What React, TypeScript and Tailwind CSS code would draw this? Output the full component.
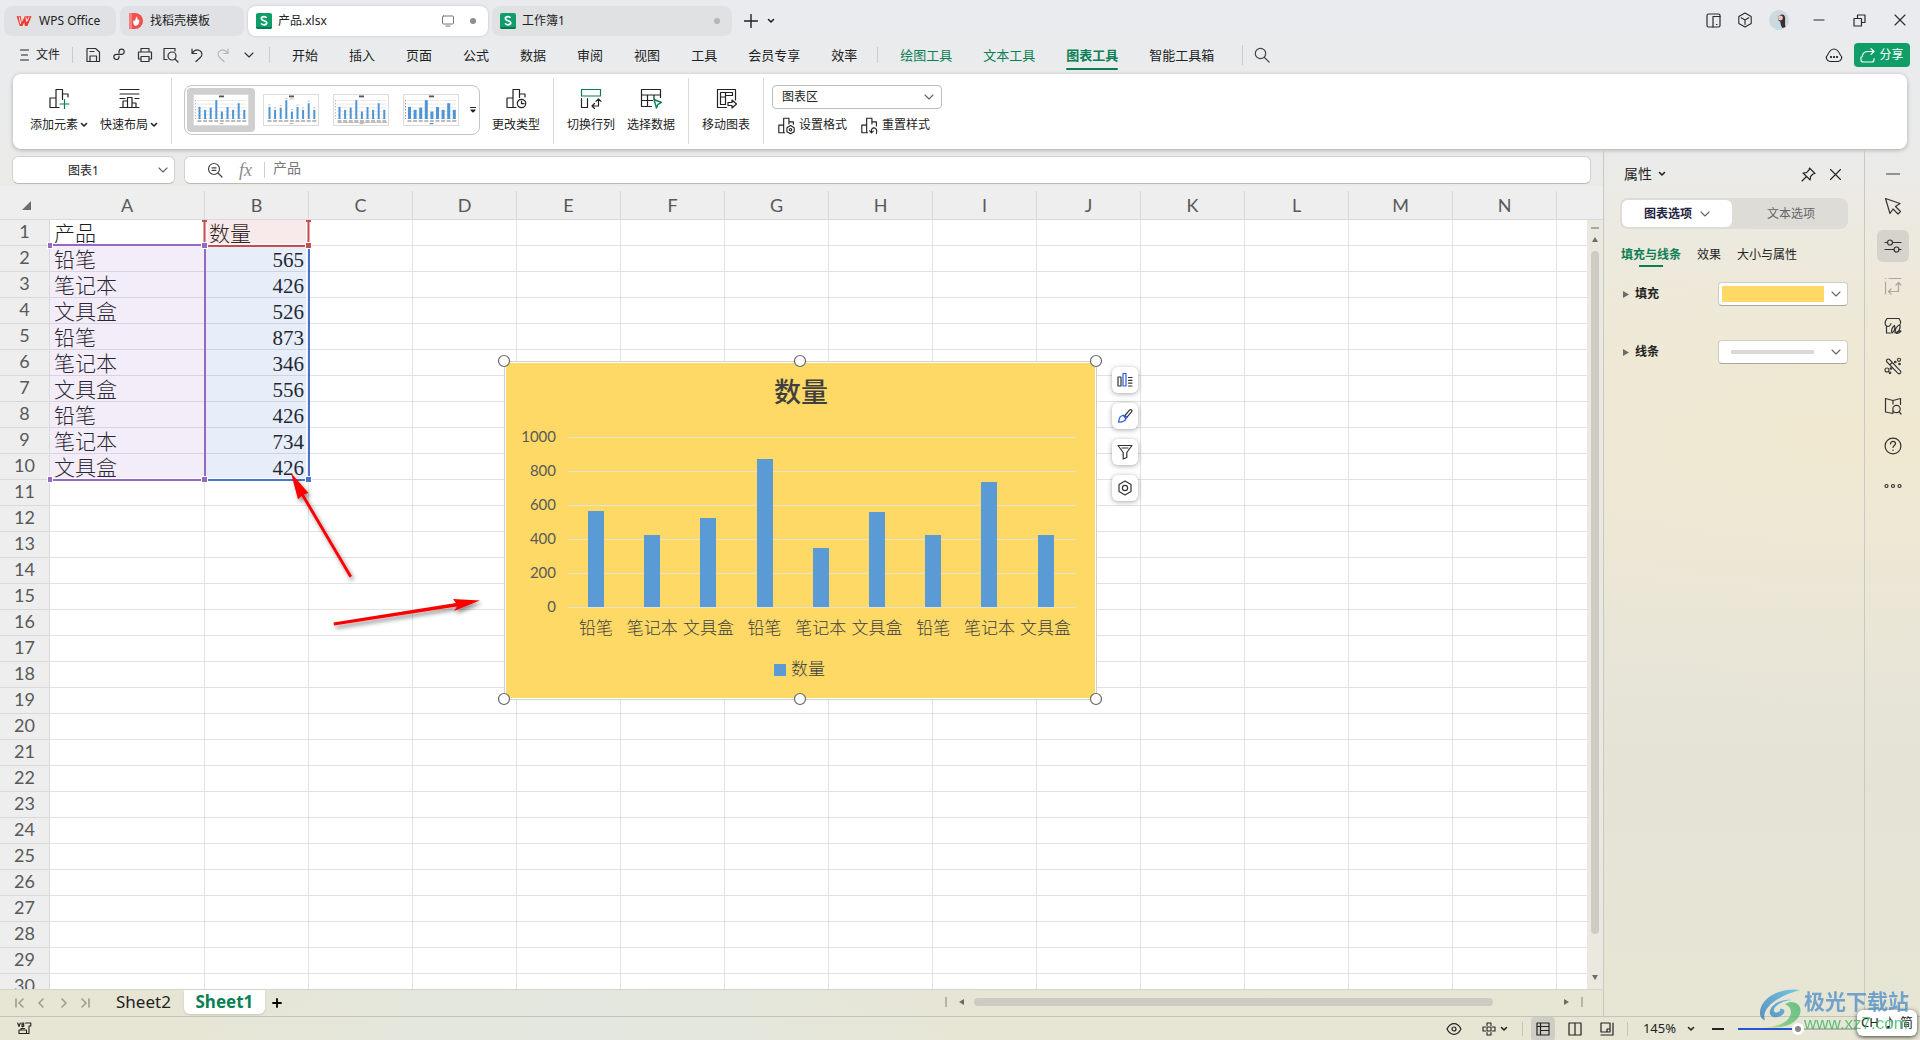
import React from "react";

const UI = "font-['Noto_Sans','Noto_Sans_CJK_SC',sans-serif]";

type IconProps = {
  w?: number;
  h?: number;
  box?: string;
  className?: string;
  sw?: number;
  children: React.ReactNode;
};

function Icon({ w = 16, h = 16, box, className = "", sw = 1.2, children }: IconProps) {
  return (
    <svg
      width={w}
      height={h}
      viewBox={box ?? `0 0 ${w} ${h}`}
      fill="none"
      stroke="currentColor"
      strokeWidth={sw}
      strokeLinecap="round"
      strokeLinejoin="round"
      className={`shrink-0 ${className}`}
      aria-hidden="true"
    >
      {children}
    </svg>
  );
}

function Chevron({ className = "" }: { className?: string }) {
  return (
    <Icon w={10} h={6} className={className} sw={1.1}>
      <path d="M1 1l4 4 4-4" />
    </Icon>
  );
}

function Caret({ className = "" }: { className?: string }) {
  return (
    <Icon w={8} h={6} className={className} sw={1.6}>
      <path d="M1.5 1.5L4 4l2.5-2.5" />
    </Icon>
  );
}

/* ---------- title bar ---------- */

function SheetBadge() {
  return (
    <svg width="16" height="16" viewBox="0 0 16 16" className="shrink-0" aria-hidden="true">
      <rect width="16" height="16" rx="2" fill="#0f9d68" />
      <path d="M0 14h16v0a2 2 0 0 1-2 2H2a2 2 0 0 1-2-2z" fill="#0b7a50" />
      <path
        d="M10.6 4.9C10 4 9.1 3.7 8 3.7c-1.5 0-2.6.7-2.6 1.9 0 2.7 5.3 1.5 5.3 4.2 0 1.2-1.2 2-2.7 2-1.3 0-2.3-.5-2.9-1.4"
        fill="none"
        stroke="#fff"
        strokeWidth="1.7"
      />
    </svg>
  );
}

function TitleBar() {
  return (
    <header className="flex h-10 items-start pt-1.5 pl-1 text-xs text-[#222]">
      <nav className="flex items-center gap-1" aria-label="文档标签">
        <button className="flex h-[30px] w-28 items-center gap-1.5 rounded-lg bg-[#dfe1e4] pl-3">
          <svg width="17" height="12" viewBox="0 0 17 12" fill="none" className="shrink-0" aria-hidden="true">
            <path d="M.6 1.2h4.2l1 6.3 3-6.3h6.8L11.4 11H8.900l-.6-3.700L6.400 11H3.800z" fill="#f03a2e" />
            <path d="M3.300 2.200l1.300 6.600M9.800 2.300l1 4.200 2.200-4.300" stroke="#fff" strokeWidth="1" />
          </svg>
          WPS Office
        </button>
        <button className="flex h-[30px] w-31 items-center gap-1.5 rounded-lg bg-[#dfe1e4] pl-2">
          <svg width="16" height="16" viewBox="0 0 16 16" className="shrink-0" aria-hidden="true">
            <path d="M1 0h6a8 8 0 0 1 0 16H1z" fill="#f0504c" />
            <path d="M1 0h3v16H1z" fill="#f57f7c" />
            <path d="M7.5 13C5 12 4.8 9 6 6.8c.4 1 .8 1.300 1.200 1.400C7 6 8 4.500 9.200 3.200 9 5 9.500 6 10 7.200c.5-.4.7-.7.9-1.200C12 9 11 12.200 7.500 13z" fill="#fff" />
          </svg>
          找稻壳模板
        </button>
        <button className="flex h-[30px] w-60 items-center gap-1.5 rounded-lg bg-white pr-3 pl-2 shadow-[0_0_3px_rgba(0,0,0,0.18)]">
          <SheetBadge />
          产品.xlsx
          <Icon w={12} h={12} className="ml-auto text-[#777]" sw={1}>
            <rect x="0.5" y="1" width="11" height="8" rx="1" />
            <path d="M4 11h4" />
          </Icon>
          <span className="ml-2.5 size-1.5 rounded-full bg-[#8d8d8d]" />
        </button>
        <button className="flex h-[30px] w-60 items-center gap-1.5 rounded-lg bg-[#dfe1e3] pr-3 pl-2">
          <SheetBadge />
          工作簿1
          <span className="ml-auto size-1.5 rounded-full bg-[#b4b6b8]" />
        </button>
      </nav>
      <button className="ml-3 flex h-[30px] items-center" aria-label="新建">
        <Icon w={14} h={14} sw={1.4}>
          <path d="M7 .5v13M.5 7h13" />
        </Icon>
      </button>
      <button className="ml-[9px] flex h-[30px] items-center" aria-label="标签列表">
        <Caret />
      </button>
      <div className="mr-3.5 ml-auto flex h-7 items-center text-[#2b2b2b]">
        <button aria-label="窗口布局">
          <Icon w={15} h={15}>
            <rect x="1" y="1" width="13" height="13" rx="1.5" />
            <path d="M7 14V3.500h7M10.500 11.500h.5" />
          </Icon>
        </button>
        <button className="ml-4" aria-label="应用">
          <Icon w={16} h={16} sw={1.1}>
            <path d="M8 1l6.200 3.500v7L8 15l-6.200-3.500v-7zM4.200 5.700L8 8l3.800-2.300M8 8v4.500" />
          </Icon>
        </button>
        <button className="ml-4" aria-label="账户">
          <svg width="20" height="20" viewBox="0 0 20 20" aria-hidden="true">
            <circle cx="10" cy="10" r="10" fill="#cdd9de" />
            <path d="M9 8c1-4 6-5 7-1 .5 3-.5 7 .5 10l-3 1-3-4z" fill="#3a2c33" />
            <circle cx="11.5" cy="8" r="2.4" fill="#e9c9bf" />
            <path d="M6 19c0-5 2-8 5-8l2 8.400A10 10 0 0 1 6 19z" fill="#c3dce2" />
          </svg>
        </button>
        <button className="ml-6" aria-label="最小化">
          <Icon w={12} h={12}>
            <path d="M1 6h10" />
          </Icon>
        </button>
        <button className="ml-7" aria-label="还原">
          <Icon w={13} h={13} sw={1.2}>
            <path d="M1 4.500h7.500V12H1zM4.500 4.500V1H12v7.500H8.500" />
          </Icon>
        </button>
        <button className="ml-7" aria-label="关闭">
          <Icon w={12} h={12} sw={1.1}>
            <path d="M1 1l10 10M11 1L1 11" />
          </Icon>
        </button>
      </div>
    </header>
  );
}

/* ---------- menu row ---------- */

const MENU_ITEMS = ["开始", "插入", "页面", "公式", "数据", "审阅", "视图", "工具", "会员专享", "效率"];

function MenuRow() {
  return (
    <div className="flex h-[34px] items-center pr-2.5 pb-1 pl-5 text-[13px] text-[#222]">
      <button className="flex items-center gap-[7px] text-xs">
        <Icon w={9} h={12} sw={1.1}>
          <path d="M.5 1h8M1.500 6h6M.5 11h8" />
        </Icon>
        文件
      </button>
      <span className="ml-3 h-4 w-px bg-[#c9cbcd]" />
      <div className="ml-3 flex items-center gap-2.5 text-[#333]">
        <button aria-label="保存">
          <Icon>
            <path d="M2 1.500h8.500L14.500 5v9.500H2zM5 14.500V9h6.500v5.500M5 4.500h4" />
          </Icon>
        </button>
        <button aria-label="输出为PDF">
          <Icon>
            <path d="M8 6V4.500a2.600 2.600 0 1 1 2.600 2.800H5.400a2.600 2.600 0 1 0 2.600 2.800V9" />
          </Icon>
        </button>
        <button aria-label="打印">
          <Icon>
            <path d="M4 5V1.500h8V5M4 12H1.500V5h13v7H12M4 9.500h8v5H4z" />
          </Icon>
        </button>
        <button aria-label="打印预览">
          <Icon>
            <path d="M4 12.500H1v-11h11V4" />
            <circle cx="9" cy="9" r="4" />
            <path d="M12 12l3 3" />
          </Icon>
        </button>
        <button aria-label="撤销">
          <Icon>
            <path d="M3 2v4.500h4.500M3.200 6.300C5 3.500 8 2.300 10.500 3.500c3.200 1.600 3 5 .8 7L7 14.500" />
          </Icon>
        </button>
        <button aria-label="恢复" className="text-[#b5b7b9]">
          <Icon>
            <path d="M13 2v4.500H8.500M12.800 6.300C11 3.500 8 2.300 5.500 3.500c-3.200 1.600-3 5-.8 7L9 14.500" />
          </Icon>
        </button>
        <button aria-label="更多" className="flex w-4 justify-center">
          <Chevron />
        </button>
      </div>
      <span className="ml-3 h-4 w-px bg-[#c9cbcd]" />
      <nav className="ml-[22px] flex items-center gap-[31px] pt-0.5" aria-label="功能区">
        {MENU_ITEMS.map((m) => (
          <button key={m}>{m}</button>
        ))}
      </nav>
      <span className="ml-5 h-4 w-px bg-[#c9cbcd]" />
      <nav className="ml-[22px] flex items-center gap-[31px] pt-0.5 text-[#0b7f54]" aria-label="上下文工具">
        <button>绘图工具</button>
        <button>文本工具</button>
        <button className="relative font-bold">
          图表工具
          <span className="absolute inset-x-0 -bottom-1 h-0.5 rounded bg-[#0b7f54]" />
        </button>
        <button className="text-[#222]">智能工具箱</button>
      </nav>
      <span className="ml-7 h-5 w-px bg-[#c9cbcd]" />
      <button className="ml-[11px]" aria-label="搜索">
        <Icon className="text-[#444]">
          <circle cx="6.5" cy="6.5" r="5.2" />
          <path d="M10.500 10.500l4.700 4.700" />
        </Icon>
      </button>
      <button className="ml-auto" aria-label="云同步">
        <Icon w={18} h={16} sw={1.1}>
          <path d="M5 14.500h8a3.800 3.800 0 0 0 2.300-6.700C13.700 4.500 11.500 2 9 2S4.300 4.500 2.700 7.800A3.800 3.800 0 0 0 5 14.500z" />
          <path d="M5.800 10h.4M8.800 10h.4M11.800 10h.4" strokeWidth="1.8" />
        </Icon>
      </button>
      <button className="ml-[11px] flex h-6 w-14 items-center justify-center gap-1 rounded bg-[#0f9d68] text-xs text-white">
        <Icon w={15} h={15} sw={1.1}>
          <path d="M1 9v3a2 2 0 0 0 2 2h9a2 2 0 0 0 2-2v-1.500M2 9c.5-3.500 3-5.500 6-5.500h6M11 .7l3 2.800-3 2.800" />
        </Icon>
        分享
      </button>
    </div>
  );
}

/* ---------- ribbon ---------- */

const THUMB_DATA = [565, 426, 526, 873, 346, 556, 426, 734, 426];

function Thumb({ kind, active = false }: { kind: number; active?: boolean }) {
  const barW = kind === 3 ? 3 : 2;
  return (
    <button
      className={`flex h-11 w-[68px] items-center justify-center rounded ${active ? "bg-[#cfcfcf]" : ""}`}
      aria-label={`图表样式${kind + 1}`}
    >
      <svg width="56" height="32" viewBox="0 0 56 32" aria-hidden="true">
        <rect x="0.5" y="0.5" width="55" height="31" fill="#fff" stroke="#dcdcdc" />
        <rect x="26" y="1.5" width="5" height="1.8" fill="#555" />
        {kind !== 1 &&
          [0, 1, 2, 3, 4, 5].map((i) => (
            <path key={i} d={`M4 ${6.5 + i * 3.6}h49`} stroke="#e4e4e4" strokeWidth="0.8" />
          ))}
        {kind !== 1 && (
          <path d="M2.500 6v19" stroke={kind === 3 ? "#9a94b8" : "#bbb"} strokeWidth="1" strokeDasharray="1.5 1.5" />
        )}
        {kind === 1 && <path d="M26 5h5" stroke="#c4c4c4" strokeWidth="1" />}
        {THUMB_DATA.map((v, i) => {
          const h = v * 0.0215;
          const x = 6.5 + i * 5.6;
          return (
            <g key={i}>
              <rect x={x - barW / 2} y={25 - h} width={barW} height={h} fill="#4f94d4" />
              <path d={`M${x - 2} 27h4`} stroke="#8d8d8d" strokeWidth="1.2" />
              {kind === 1 && <path d={`M${x - 1} ${23 - h}h2`} stroke="#bbb" strokeWidth="1" />}
              {kind === 2 && <path d={`M${x - 2} 28.500h5`} stroke="#aaa" strokeWidth="0.8" />}
            </g>
          );
        })}
        <rect x="26.5" y="29" width="4" height="1.2" fill={kind === 3 ? "#4f94d4" : "#bbb"} />
      </svg>
    </button>
  );
}

function RibbonButton({ icon, label, caret = false }: { icon: React.ReactNode; label: string; caret?: boolean }) {
  return (
    <button className="flex flex-col items-center gap-1.5">
      {icon}
      <span className="flex items-center gap-0.5 leading-5">
        {label}
        {caret && <Caret />}
      </span>
    </button>
  );
}

function Divider() {
  return <span className="h-[66px] w-px bg-[#d9d9d9]" />;
}

function Ribbon() {
  return (
    <section
      className="mx-[13px] flex h-[75px] items-start rounded-lg bg-white pt-1 text-xs text-[#222] shadow-[0_1px_4px_rgba(0,0,0,0.28)]"
      aria-label="图表工具"
    >
      <div className="flex h-[66px] items-start gap-3 pt-2.5 pr-[13px] pl-[17px]">
        <RibbonButton
          caret
          label="添加元素"
          icon={
            <Icon w={21} h={21}>
              <path d="M1 10h6M1 10v9.500h9M7 19.500V1.500h6.500v10M13.500 6H19v3" />
              <path d="M15.500 11.500v9M11 16h9" stroke="#0b7f54" />
            </Icon>
          }
        />
        <RibbonButton
          caret
          label="快速布局"
          icon={
            <Icon w={21} h={21}>
              <path d="M1 1.500h19M1 6h19M1 10.500h5M16 10.500h4M1 19.500h19M4 19.500V13h4.500v6.500V9.500H13v10V15h4v4.500" />
            </Icon>
          }
        />
      </div>
      <Divider />
      <div className="mt-[7px] ml-3 flex h-[50px] items-center gap-0.5 rounded-lg border border-[#c4c4c4] pl-0.5">
        <Thumb kind={0} active />
        <Thumb kind={1} />
        <Thumb kind={2} />
        <Thumb kind={3} />
        <button className="flex w-3 justify-center" aria-label="更多样式">
          <Icon w={8} h={8} sw={1.1}>
            <path d="M1.500 1.500h5" />
            <path d="M2 4h4L4 6z" fill="currentColor" />
          </Icon>
        </button>
      </div>
      <div className="flex h-[66px] items-start pt-2.5 pr-[13px] pl-3">
        <RibbonButton
          label="更改类型"
          icon={
            <Icon w={21} h={21}>
              <path d="M1 10h6M1 10v9.500h9M7 19.500V1.500h6.500v8M13.500 6H19v3" />
              <circle cx="15.5" cy="15.5" r="4.2" />
              <path d="M15.500 13v2.700H18" />
            </Icon>
          }
        />
      </div>
      <Divider />
      <div className="flex h-[66px] items-start gap-3 pt-2.5 pr-[13px] pl-[13px]">
        <RibbonButton
          label="切换行列"
          icon={
            <Icon w={22} h={21}>
              <path d="M1.500 1.500h19V8h-19z" stroke="#0b7f54" />
              <path d="M1.500 10.500v9h6v-9M12 18h6.500v-7M14.500 15.500L12 18l2.500 2.500M16 13.300l2.500-2.500 2.500 2.500" />
            </Icon>
          }
        />
        <RibbonButton
          label="选择数据"
          icon={
            <Icon w={22} h={21}>
              <path d="M1.500 1.500h19v8M1.500 1.500v17h10M1.500 7h19M1.500 12.500h11M7.500 7v11.500M14 7v4" />
              <path d="M14 11.500l7.500 3-3.500 1.800-1.500 3.700z" stroke="#0b7f54" strokeWidth="1.4" />
            </Icon>
          }
        />
      </div>
      <Divider />
      <div className="flex h-[66px] items-start pt-2.5 pr-[13px] pl-[13px]">
        <RibbonButton
          label="移动图表"
          icon={
            <Icon w={21} h={21}>
              <path d="M10.500 19.500h-9v-18h18V12M4.500 16.500v-12h12v3h-7v9h-5M4.500 9h5M9.500 4.500V9" />
              <path d="M12 14.500h4v-2.500l4.500 4-4.500 4v-2.500h-4z" />
            </Icon>
          }
        />
      </div>
      <Divider />
      <div className="mt-[7px] ml-2 flex flex-col gap-1.5">
        <label className="relative flex items-center">
          <select
            aria-label="图表元素"
            className="h-6 w-[170px] appearance-none rounded border border-[#bdbdbd] bg-white pl-[9px] text-xs text-[#222]"
          >
            <option>图表区</option>
          </select>
          <Chevron className="pointer-events-none absolute right-2 text-[#666]" />
        </label>
        <div className="flex items-center gap-3.5 pl-1.5 leading-5">
          <button className="flex items-center gap-1">
            <Icon w={17} h={19} box="0 0 21 21" sw={1.4}>
              <path d="M1 10h6M1 10v9.500h7M7 19.500V1.500h6.500v7M13.500 6H19v3" />
              <path d="M15.500 10.500l4.500 2.700v5l-4.500 2.600-4.500-2.600v-5z" />
              <circle cx="15.5" cy="15.7" r="1.5" />
            </Icon>
            设置格式
          </button>
          <button className="flex items-center gap-1">
            <Icon w={17} h={19} box="0 0 21 21" sw={1.4}>
              <path d="M1 10h6M1 10v9.500h7M7 19.500V1.500h6.500v7M13.500 6H19v5" />
              <path d="M19 20.500c1.500-4-.5-7-3-7-2 0-3.200 2-3.200 5M10.700 17l2.100 2.500 2.500-2" />
            </Icon>
            重置样式
          </button>
        </div>
      </div>
    </section>
  );
}

/* ---------- formula bar ---------- */

function FormulaBar() {
  return (
    <div className="flex gap-[9px] px-3 pt-[7px] pb-0.5">
      <label className="relative flex items-center">
        <input
          aria-label="名称框"
          defaultValue="图表1"
          className="h-7 w-[163px] rounded-md border border-[#d0d2cf] border-b-[#b9bbb8] bg-white pr-5 text-center text-xs text-[#222]"
        />
        <Chevron className="pointer-events-none absolute right-[7px] text-[#666]" />
      </label>
      <div className="flex h-7 flex-1 items-center rounded-md border border-[#d0d2cf] border-b-[#b9bbb8] bg-white pl-[22px]">
        <button aria-label="浏览公式结果">
          <Icon className="text-[#444]">
            <circle cx="7" cy="7" r="5.5" />
            <path d="M11 11l4 4M5 5.800h4M5 8.300h4" />
          </Icon>
        </button>
        <button className="ml-4 font-['Liberation_Serif',serif] text-lg leading-6 text-[#8a8a8a] italic" aria-label="插入函数">
          fx
        </button>
        <span className="ml-3 h-4 w-px bg-[#cfcfcf]" />
        <input aria-label="编辑栏" defaultValue="产品" className="ml-2 min-w-0 flex-1 bg-transparent pb-1 text-sm text-[#777]" />
      </div>
    </div>
  );
}

/* ---------- worksheet ---------- */

const COLUMNS = ["A", "B", "C", "D", "E", "F", "G", "H", "I", "J", "K", "L", "M", "N"];
const DATA: [string, string][] = [
  ["产品", "数量"],
  ["铅笔", "565"],
  ["笔记本", "426"],
  ["文具盒", "526"],
  ["铅笔", "873"],
  ["笔记本", "346"],
  ["文具盒", "556"],
  ["铅笔", "426"],
  ["笔记本", "734"],
  ["文具盒", "426"],
];
const ROWS = Array.from({ length: 30 }, (_, i) => i);

function SheetTable() {
  return (
    <table className="w-full table-fixed border-separate border-spacing-0">
      <colgroup>
        <col className="w-[50px]" />
        <col className="w-[155px]" />
        {COLUMNS.slice(1).map((c) => (
          <col key={c} className="w-[104px]" />
        ))}
        <col />
      </colgroup>
      <thead>
        <tr className="h-[29px] font-['Lato',sans-serif] text-lg leading-7 text-[#595959]">
          <th className="border-b border-[#d9d9d9] p-0">
            <svg width="9" height="9" viewBox="0 0 9 9" className="ml-[22px]" aria-hidden="true">
              <path d="M9 0v9H0z" fill="#6b6b6b" />
            </svg>
          </th>
          {COLUMNS.map((c) => (
            <th key={c} className="border-r border-b border-[#d9d9d9] p-0 font-normal">
              {c}
            </th>
          ))}
          <th className="border-b border-[#d9d9d9] p-0" />
        </tr>
      </thead>
      <tbody>
        {ROWS.map((r) => (
          <tr key={r} className="h-[26px]">
            <th className="border-r border-b border-[#d9d9d9] bg-[#eeeeee] p-0 pb-0.5 font-['Lato',sans-serif] text-lg leading-[23px] font-normal text-[#595959]">
              {r + 1}
            </th>
            {COLUMNS.map((c, ci) => (
              <td
                key={c}
                className={`h-[26px] border-r border-b border-[#e2e2e2] bg-white px-1 pt-[3px] pb-0 font-['Liberation_Serif','Noto_Sans_CJK_SC',serif] text-[21px] leading-[22px] font-light whitespace-nowrap text-[#1c1c1c] ${
                  ci === 1 && r > 0 ? "text-right" : "text-left"
                }`}
              >
                {ci < 2 && DATA[r] ? DATA[r][ci] : null}
              </td>
            ))}
            <td className="border-b border-[#e2e2e2] bg-white p-0" />
          </tr>
        ))}
      </tbody>
    </table>
  );
}

function RangeMarks() {
  return (
    <svg
      width="500"
      height="460"
      viewBox="0 191 500 460"
      fill="none"
      className="pointer-events-none absolute top-0 left-0"
      aria-hidden="true"
    >
      <defs>
        <filter id="arrowShadow" x="-20%" y="-20%" width="150%" height="150%">
          <feDropShadow dx="2" dy="3" stdDeviation="2" floodColor="#000" floodOpacity="0.45" />
        </filter>
      </defs>
      <rect x="50" y="245" width="155" height="236" fill="#9467c5" fillOpacity="0.12" />
      <rect x="205" y="220" width="104" height="26" fill="#c55050" fillOpacity="0.12" />
      <rect x="205" y="246" width="104" height="235" fill="#4472d0" fillOpacity="0.12" />
      <path
        d="M50 243.500h154M207 478.500h100M53 478.500h150M306.500 247v232M207 221v24M306.500 221v24M207.500 244h98"
        stroke="#fff"
        strokeWidth="1"
      />
      <path d="M205 480h104M309 246v234" stroke="#4a72cf" strokeWidth="2" />
      <path d="M50 245h155M205 245v235M50 480h155" stroke="#9568c4" strokeWidth="2" />
      <path d="M204.500 221v25h104v-25M202 221h5M306 221h5" stroke="#c44f4f" strokeWidth="2" />
      <g stroke="#fff" strokeWidth="1">
        <rect x="201.5" y="242.5" width="6" height="6" fill="#9568c4" />
        <rect x="305.5" y="242.5" width="6" height="6" fill="#c44f4f" />
        <rect x="201.5" y="476.5" width="6" height="6" fill="#9568c4" />
        <rect x="305.5" y="476.5" width="6" height="6" fill="#4a72cf" />
        <rect x="47.5" y="242.5" width="5" height="6" fill="#9568c4" />
        <rect x="47.5" y="476.5" width="5" height="6" fill="#9568c4" />
      </g>
      <g filter="url(#arrowShadow)" fill="#fb0505">
        <path d="M291 473l17.500 20-4.500 1.500 48 81.500-2.500 1.500-48-81.500-3.500 3.500z" />
        <path d="M480 600.500l-26 10.500 3-4.500-123 19-.5-3L456 603l-3-4z" />
      </g>
    </svg>
  );
}

const CHART = [
  { name: "铅笔", value: 565 },
  { name: "笔记本", value: 426 },
  { name: "文具盒", value: 526 },
  { name: "铅笔", value: 873 },
  { name: "笔记本", value: 346 },
  { name: "文具盒", value: 556 },
  { name: "铅笔", value: 426 },
  { name: "笔记本", value: 734 },
  { name: "文具盒", value: 426 },
];
const TICKS = [0, 200, 400, 600, 800, 1000];
const HANDLES = [
  [504, 361],
  [800, 361],
  [1096, 361],
  [504, 699],
  [800, 699],
  [1096, 699],
];

function ChartObject() {
  return (
    <svg
      width="607"
      height="353"
      viewBox="497 354 607 353"
      className="absolute top-[163px] left-[497px] font-['Noto_Sans_CJK_SC',sans-serif] font-light"
      role="img"
      aria-label="数量 柱形图"
    >
      <rect x="504.5" y="361.5" width="592" height="338" fill="#fff" stroke="#cdd0d4" />
      <rect x="506" y="363" width="589" height="335" fill="#fed966" />
      <text x="801" y="402" textAnchor="middle" fontSize="27" fontWeight="500" fill="#404040">
        数量
      </text>
      {TICKS.map((t) => {
        const y = 607 - t * 0.17;
        return (
          <g key={t}>
            <rect x="568" y={y} width="508" height="1" fill="#e6e2d6" />
            <text x="556" y={y + 5} textAnchor="end" fontSize="15" fill="#595959" className="font-['Lato',sans-serif] font-normal">
              {t}
            </text>
          </g>
        );
      })}
      {CHART.map((d, i) => {
        const cx = 596 + i * 56.2;
        return (
          <g key={i}>
            <rect
              x={Math.round(cx - 8)}
              y={Math.round(607 - d.value * 0.17)}
              width="16"
              height={Math.round(d.value * 0.17)}
              fill="#5b9bd5"
            />
            <text x={cx} y="634" textAnchor="middle" fontSize="17" fill="#404040">
              {d.name}
            </text>
          </g>
        );
      })}
      <rect x="774" y="664" width="12" height="12" fill="#5b9bd5" />
      <text x="791" y="675" fontSize="17" fill="#404040">
        数量
      </text>
      {HANDLES.map(([x, y]) => (
        <circle key={`${x}-${y}`} cx={x} cy={y} r="5.5" fill="#fff" stroke="#666" strokeWidth="1.2" />
      ))}
    </svg>
  );
}

function ChartTools() {
  const cls =
    "flex h-[26px] w-[26px] items-center justify-center rounded-md bg-white text-[#333] shadow-[0_1px_5px_rgba(0,0,0,0.35)]";
  return (
    <div className="absolute top-44 left-[1112px] flex flex-col gap-2.5">
      <button className={cls} aria-label="图表元素">
        <Icon>
          <path d="M1 5h3v9H1z" />
          <path d="M6 1.500h3V14H6z" stroke="#2f5bd8" />
          <path d="M11.500 5.500H15M11.500 8.300H15M11.500 11.100H15M11.500 14H15" />
        </Icon>
      </button>
      <button className={cls} aria-label="图表样式">
        <Icon>
          <path d="M8 7.500l4.500-5.300c1.500-1.500 3.200 0 2 1.700L10 9.200" />
          <path
            d="M4.800 7.700c1.700-.8 3.600 0 4.100 1.500.5 1.700-.4 3-2 3.800-1.700.9-3.900 1.500-5.600 1 .8-1 .8-2.200 1-3.300.3-1.300 1.300-2.500 2.500-3zM8 7.500L10 9.200M6.500 7.600l2.300 3.200"
            stroke="#2f5bd8"
          />
        </Icon>
      </button>
      <button className={cls} aria-label="图表筛选器">
        <Icon>
          <path d="M1 1.500h14L9.800 8.500v5L6.200 15V8.500zM5 4h6" />
        </Icon>
      </button>
      <button className={cls} aria-label="图表设置">
        <Icon>
          <path d="M8 1l6 3.500v7L8 15l-6-3.500v-7z" />
          <circle cx="8" cy="8" r="2.6" />
        </Icon>
      </button>
    </div>
  );
}

function VerticalScroll() {
  return (
    <div className="mt-7 flex w-4 shrink-0 flex-col items-center border-t border-[#d9d9d9] bg-[#ebe8e0] py-[7px] text-[#6b6b6b]">
      <span className="h-0.5 w-2 shrink-0 bg-[#a9a9a4]" />
      <svg width="6" height="5" viewBox="0 0 6 5" className="mt-2 shrink-0" aria-hidden="true">
        <path d="M3 0l3 5H0z" fill="currentColor" />
      </svg>
      <span className="mt-[9px] mb-[41px] w-2 flex-1 rounded-full bg-[#cdccc4]" />
      <svg width="6" height="5" viewBox="0 0 6 5" className="mb-0.5 shrink-0" aria-hidden="true">
        <path d="M3 5l3-5H0z" fill="currentColor" />
      </svg>
    </div>
  );
}

function SheetTabs() {
  return (
    <div className="flex h-[27px] shrink-0 items-start border-t border-[#d4d4cc] font-['Noto_Sans',sans-serif]">
      <div className="flex h-[25px] items-center gap-3 pl-3.5 text-[#9c9c94]">
        <button aria-label="第一个">
          <Icon w={11} h={10} sw={1.6}>
            <path d="M2 1v8M9 1L5 5l4 4" />
          </Icon>
        </button>
        <button aria-label="上一个">
          <Icon w={10} h={10} sw={1.6}>
            <path d="M6 1L2 5l4 4" />
          </Icon>
        </button>
        <button aria-label="下一个">
          <Icon w={10} h={10} sw={1.6}>
            <path d="M3 1l4 4-4 4" />
          </Icon>
        </button>
        <button aria-label="最后一个">
          <Icon w={11} h={10} sw={1.6}>
            <path d="M8 1v8M1 1l4 4-4 4" />
          </Icon>
        </button>
      </div>
      <button className="ml-6 h-6 text-[17px] leading-6 text-[#222]">Sheet2</button>
      <button className="ml-[13px] h-6 w-[81px] rounded-b-md bg-white text-[17px] leading-6 font-bold text-[#0b7f54] shadow-sm">
        Sheet1
      </button>
      <button className="ml-[7px] flex h-[25px] items-center" aria-label="新建工作表">
        <Icon w={10} h={10} sw={1.8}>
          <path d="M5 1v8M1 5h8" />
        </Icon>
      </button>
      <div className="mr-5 ml-auto flex h-6 w-[638px] items-center text-[#6b6b6b]">
        <span className="h-2.5 w-0.5 bg-[#b5b5ac]" />
        <svg width="5" height="6" viewBox="0 0 5 6" className="ml-3" aria-hidden="true">
          <path d="M0 3l5-3v6z" fill="currentColor" />
        </svg>
        <span className="mr-[71px] ml-2.5 h-2 flex-1 rounded-full bg-[#cdccc2]" />
        <svg width="5" height="6" viewBox="0 0 5 6" aria-hidden="true">
          <path d="M5 3L0 0v6z" fill="currentColor" />
        </svg>
        <span className="ml-3 h-2.5 w-0.5 bg-[#b5b5ac]" />
      </div>
    </div>
  );
}

/* ---------- property panel ---------- */

function Triangle() {
  return (
    <svg width="6" height="7" viewBox="0 0 6 7" className="shrink-0 text-[#6b6b6b]" aria-hidden="true">
      <path d="M0 0l6 3.500L0 7z" fill="currentColor" />
    </svg>
  );
}

function PropertyPanel() {
  return (
    <aside className="w-[261px] shrink-0 border-l border-[#c9c9c4] pr-4 pl-4 text-xs text-[#222]" aria-label="属性">
      <div className="mt-[15px] flex h-5 items-center pr-[7px] pl-1">
        <button className="flex items-center gap-1.5 text-sm leading-5">
          属性
          <Caret />
        </button>
        <button className="ml-auto" aria-label="固定">
          <Icon w={15} h={15} sw={1.1}>
            <path d="M8.500 1l5.500 5.500-2 .5-2.500 2.500-.3 3.500L2 6l3.500-.4L8 3zM5 10l-4 4" />
          </Icon>
        </button>
        <button className="ml-3.5" aria-label="关闭属性">
          <Icon w={11} h={11} sw={1.1}>
            <path d="M.5.5l10 10M10.500.5l-10 10" />
          </Icon>
        </button>
      </div>
      <div className="mt-3.5 flex h-[31px] items-center rounded-lg bg-[#dedcd6] p-0.5">
        <button className="flex h-[27px] w-[110px] items-center justify-center gap-2 rounded-md bg-white font-bold text-[#1f2340]">
          图表选项
          <Chevron className="text-[#666]" />
        </button>
        <button className="flex-1 pl-1 text-[#666]">文本选项</button>
      </div>
      <div className="mt-4 flex gap-4 pl-px leading-5">
        <button className="relative font-bold text-[#0b7f54]">
          填充与线条
          <span className="absolute -bottom-0.5 left-[18px] h-0.5 w-6 bg-[#0b7f54]" />
        </button>
        <button>效果</button>
        <button>大小与属性</button>
      </div>
      <div className="mt-[17px] flex h-6 items-center justify-between pl-[3px]">
        <button className="flex items-center gap-1.5 font-bold">
          <Triangle />
          填充
        </button>
        <button
          aria-label="填充颜色"
          aria-haspopup="listbox"
          className="flex h-6 w-[130px] items-center justify-between rounded border border-[#d0cdc0] border-b-[#a9a79d] bg-white pr-1.5 pl-[3px] text-[#666]"
        >
          <span className="h-4 w-[102px] bg-[#fed966]" />
          <Chevron />
        </button>
      </div>
      <div className="mt-[34px] flex h-6 items-center justify-between pl-[3px]">
        <button className="flex items-center gap-1.5 font-bold">
          <Triangle />
          线条
        </button>
        <button
          aria-label="线条样式"
          aria-haspopup="listbox"
          className="flex h-6 w-[130px] items-center justify-between rounded border border-[#d0cdc0] border-b-[#a9a79d] bg-white pr-1.5 pl-3 text-[#666]"
        >
          <span className="h-1 w-[83px] bg-[#d9d9d9]" />
          <Chevron />
        </button>
      </div>
    </aside>
  );
}

function Rail() {
  const cell = "flex h-8 w-8 items-center justify-center rounded-md";
  return (
    <aside className="flex w-14 shrink-0 flex-col items-center gap-2 border-l border-[#c9c9c4] text-[#333]" aria-label="侧边栏">
      <button className="mt-[17px] flex h-4 w-8 items-center justify-center" aria-label="收起">
        <span className="h-0.5 w-3.5 bg-[#929292]" />
      </button>
      <button className={cell} aria-label="选择">
        <Icon w={18} h={18}>
          <path d="M1.500 1.500l14.500 5-4.500 3 5 5-2.500 2.500-5-5L6 16.500z" />
        </Icon>
      </button>
      <button className={`${cell} bg-[#d5d3cb]`} aria-label="属性">
        <Icon w={18} h={18}>
          <path d="M1 5.500h2.500M8.500 5.500H17M1 12.500h9M15 12.500h2" />
          <circle cx="6" cy="5.5" r="2.5" />
          <circle cx="12.5" cy="12.5" r="2.5" />
        </Icon>
      </button>
      <button className={`${cell} text-[#aaa79c]`} aria-label="转换">
        <Icon w={18} h={18}>
          <path d="M1.500 5v12M5 1.500h12M1.500 1.500h.1M4.500 14.500h10v-9M7 12l-2.500 2.500L7 17M12 8l2.500-2.500L17 8" />
        </Icon>
      </button>
      <button className={cell} aria-label="美化">
        <Icon w={18} h={18}>
          <path d="M6.500 16H2.500V9M2.500 9C1 8 1 6 1.500 4L3 1.500h12l1.500 2.800v2M2.500 9c2 .8 4 0 4.500-2.500" />
          <path d="M8 16c-1-3 0-5.500 2.500-7.500.8 3 .2 5.500-2.500 7.500zM11 16c0-4 1.500-7 5-8.500.5 4-1 7.500-5 8.500zM12.500 16.300c1.500-1.800 3-2.600 4.500-2.300-.8 1.800-2 2.500-4.500 2.300z" />
        </Icon>
      </button>
      <button className={cell} aria-label="工具">
        <Icon w={18} h={18} sw={1.1}>
          <path d="M5.500 2.500L16.300 13.800a1.700 1.700 0 0 1-2.500 2.400L3 5a1.700 1.700 0 0 1 2.500-2.500zM8.300 5.500L5.800 7.900" />
          <circle cx="15" cy="2.800" r="1.6" />
          <circle cx="11.3" cy="5" r="0.8" />
          <circle cx="3" cy="13" r="2" />
          <circle cx="7" cy="11.5" r="0.8" />
          <circle cx="6" cy="15.800" r="0.8" />
          <circle cx="15.5" cy="7" r="0.8" />
        </Icon>
      </button>
      <button className={cell} aria-label="查找">
        <Icon w={18} h={18}>
          <path d="M9 16.500l-7.500-1.500V1.500L9 3.500l7.500-2v6M9 3.500V7M9 16.500V14" />
          <circle cx="12.5" cy="12" r="3.7" />
          <path d="M15 14.700l2 2.300" />
        </Icon>
      </button>
      <button className={cell} aria-label="帮助">
        <Icon w={18} h={18}>
          <circle cx="9" cy="9" r="7.9" />
          <path d="M6.500 7c0-1.600 1.100-2.600 2.500-2.600s2.500.9 2.500 2.300c0 1.700-2.500 1.900-2.500 3.800M9 13.200v.2" />
        </Icon>
      </button>
      <button className={cell} aria-label="更多">
        <Icon w={18} h={6}>
          <circle cx="2.5" cy="3" r="1.5" />
          <circle cx="9" cy="3" r="1.5" />
          <circle cx="15.5" cy="3" r="1.5" />
        </Icon>
      </button>
    </aside>
  );
}

/* ---------- status bar ---------- */

function StatusBar() {
  return (
    <footer className="flex h-6 shrink-0 items-center border-t border-[#c4c4b8] pl-[17px] text-[#222]">
      <button aria-label="宏">
        <Icon w={15} h={14} sw={1.1}>
          <path d="M.7 1l1.300 3.500L3.300 1M5 1v3.600h1.200a1 1 0 0 0 0-1.900H5 6a.8.8 0 0 0 0-1.700zM8.500 1h5.300v3H12v7.500H2V8h7.500v3.500M4 8V6.500h3.500" />
        </Icon>
      </button>
      <div className="mr-16 ml-auto flex h-6 items-center">
        <button aria-label="护眼模式">
          <Icon w={16} h={14}>
            <path d="M1 7c1.800-3.500 4.300-5.300 7-5.300S13.200 3.500 15 7c-1.800 3.500-4.300 5.300-7 5.300S2.800 10.500 1 7z" />
            <circle cx="8" cy="7" r="2" />
          </Icon>
        </button>
        <button className="ml-5 flex items-center gap-1" aria-label="阅读模式">
          <Icon w={14} h={14} sw={1.1}>
            <path d="M5 3.500V1h4v2.500M5 10.500V13h4v-2.500M3.500 5H1v4h2.500M10.500 5H13v4h-2.500M5 5h4v4H5z" />
          </Icon>
          <Caret />
        </button>
        <span className="ml-3.5 h-3.5 w-px bg-[#c4c4b8]" />
        <button className="ml-2 flex h-6 w-6 items-center justify-center rounded bg-[#cfcec6]" aria-label="普通视图">
          <Icon w={14} h={14}>
            <path d="M1 1h12v12H1zM1 4.500h12M4.500 1v12M4.500 8.500H13" />
          </Icon>
        </button>
        <button className="ml-[13px]" aria-label="分页预览">
          <Icon w={14} h={14}>
            <path d="M1 1h12v12H1zM7 1v12" />
          </Icon>
        </button>
        <button className="ml-[18px]" aria-label="页面布局">
          <Icon w={14} h={14}>
            <path d="M1 1h9v9H1zM10 7H7v3M13 1v12H1" />
          </Icon>
        </button>
        <span className="ml-[13px] h-3.5 w-px bg-[#c4c4b8]" />
        <button className="ml-[15px] flex items-center gap-[11px] text-[13px]">
          145%
          <Caret />
        </button>
        <button className="ml-[17px]" aria-label="缩小">
          <span className="block h-0.5 w-3 bg-[#222]" />
        </button>
        <input
          type="range"
          aria-label="缩放"
          defaultValue={51}
          className="ml-3.5 h-3 w-[118px] appearance-none bg-[linear-gradient(90deg,#2553dc_50%,#b5b5ac_50%)] bg-[length:100%_2px] bg-center bg-no-repeat [&::-webkit-slider-thumb]:size-3 [&::-webkit-slider-thumb]:appearance-none [&::-webkit-slider-thumb]:rounded-full [&::-webkit-slider-thumb]:border-[3px] [&::-webkit-slider-thumb]:border-white [&::-webkit-slider-thumb]:bg-[#888]"
        />
      </div>
    </footer>
  );
}

function Watermark() {
  return (
    <div className="pointer-events-none absolute right-0 bottom-0 h-[54px] w-40">
      <div className="absolute right-[3px] bottom-1 flex h-[26px] w-[60px] items-center justify-center gap-1 rounded-md bg-white text-[13px] text-[#222] shadow-[0_1px_4px_rgba(0,0,0,0.75)]">
        <span>CH</span>
        <span>♪</span>
        <span>简</span>
      </div>
      <div className="absolute inset-0 flex items-start gap-0.5 opacity-75">
        <svg width="42" height="42" viewBox="0 0 42 42" fill="none" className="mt-[3px] shrink-0" aria-hidden="true">
          <defs>
            <linearGradient id="wmBlue" x1="40" y1="0" x2="2" y2="30" gradientUnits="userSpaceOnUse">
              <stop stopColor="#4cc0ea" />
              <stop offset="1" stopColor="#2f77b8" />
            </linearGradient>
            <linearGradient id="wmGreen" x1="40" y1="14" x2="6" y2="38" gradientUnits="userSpaceOnUse">
              <stop stopColor="#3fb56d" />
              <stop offset="0.6" stopColor="#64c26a" />
              <stop offset="1" stopColor="#d6e04c" />
            </linearGradient>
          </defs>
          <path d="M40 1C22-2 2 8 0 22c-.6 5 1.500 8 5 9.500C1 21 14 8 40 1z" fill="url(#wmBlue)" />
          <path d="M32 11C19 9 8 18 10 25c1.500 5 11 4 14-1 1.500-3-1-5-4-4 1 3-5 5-6 2-1-4 6-10 18-11z" fill="url(#wmBlue)" />
          <path d="M30 13c8 0 12 5 10 12-3 9-17 16-35 13 12 0 22-4 25-11 2-5 1-9-5-12z" fill="url(#wmGreen)" />
        </svg>
        <div className="flex flex-col font-['Liberation_Sans','Noto_Sans_CJK_SC',sans-serif]">
          <span className="h-7 text-[21px] leading-8 font-bold text-[#4b8cc6]">极光下载站</span>
          <span className="text-[17px] leading-5 text-[#2fb35f]">www.xz7.com</span>
        </div>
      </div>
    </div>
  );
}

export default function App() {
  return (
    <div
      className={`relative flex h-screen flex-col overflow-hidden bg-[radial-gradient(ellipse_at_97%_42%,#f0e8d0_0%,rgba(240,232,208,0)_32%),radial-gradient(ellipse_at_30%_100%,#e2e7e0_0%,rgba(226,231,224,0)_22%),linear-gradient(180deg,#e9ebee_0%,#eaebeb_12%,#ece9df_30%,#e5e3d6_75%,#e7e6d4_100%)] ${UI}`}
    >
      <TitleBar />
      <MenuRow />
      <Ribbon />
      <div className="flex min-h-0 flex-1">
        <main className="flex min-w-0 flex-1 flex-col">
          <FormulaBar />
          <div className="flex min-h-0 flex-1 bg-[#eeeeee] pt-[5px]">
            <div className="relative min-w-0 flex-1 overflow-hidden">
              <SheetTable />
              <RangeMarks />
              <ChartObject />
              <ChartTools />
            </div>
            <VerticalScroll />
          </div>
          <SheetTabs />
        </main>
        <PropertyPanel />
        <Rail />
      </div>
      <StatusBar />
      <Watermark />
    </div>
  );
}
